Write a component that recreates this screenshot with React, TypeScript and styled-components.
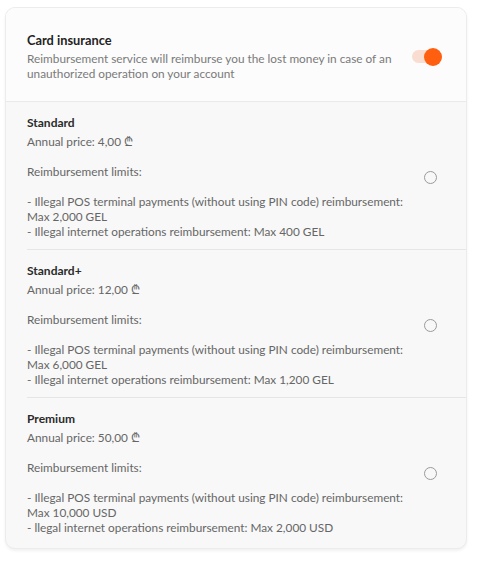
import React from "react";
import styled, { createGlobalStyle } from "styled-components";

const GlobalStyle = createGlobalStyle`
  body {
    margin: 0;
    background: #ffffff;
    font-family: Lato, "Noto Sans", sans-serif;
  }
`;

const Page = styled.div`
  padding: 7px 15px 0 5px;
`;

const Card = styled.section`
  width: 460px;
  border: 1px solid #ececec;
  border-radius: 10px;
  background: #f8f8f8;
  box-shadow: 0 2px 3px rgba(0, 0, 0, 0.06);
  overflow: hidden;
`;

const Header = styled.header`
  display: flex;
  align-items: center;
  gap: 20px;
  padding: 24px 21px 20px 21px;
  background: #fcfcfc;
  border-bottom: 1px solid #e9e9e9;
`;

const HeaderText = styled.div`
  flex: 1;
`;

const Title = styled.h2`
  margin: 0 0 3px;
  font-size: 12.8px;
  font-weight: 700;
  color: #232323;
  line-height: 16px;
`;

const Description = styled.p`
  margin: 0;
  font-size: 11.8px;
  line-height: 15px;
  color: #7a7a7a;
`;

const Toggle = styled.div<{ on?: boolean }>`
  position: relative;
  flex: none;
  width: 25px;
  height: 13px;
  margin-right: 8px;
  border-radius: 7px;
  background: ${(p) => (p.on ? "#f8ddd0" : "#e2e2e2")};

  &::after {
    content: "";
    position: absolute;
    top: 50%;
    left: ${(p) => (p.on ? "12px" : "-4px")};
    width: 18px;
    height: 18px;
    margin-top: -9px;
    border-radius: 50%;
    background: ${(p) => (p.on ? "#ff5f0f" : "#ffffff")};
  }
`;

const Options = styled.div`
  padding-left: 21px;
`;

const Option = styled.label`
  display: flex;
  align-items: center;
  gap: 12px;
  padding: 13px 29px 10px 0;
  border-bottom: 1px solid #e6e6e6;

  &:last-child {
    border-bottom: none;
    padding-bottom: 13px;
  }
`;

const OptionText = styled.div`
  flex: 1;
  font-size: 11.8px;
  line-height: 15px;
  color: #666666;
`;

const OptionName = styled.div`
  margin-bottom: 4px;
  font-size: 12px;
  font-weight: 700;
  color: #2a2a2a;
`;

const Line = styled.div<{ gapAfter?: boolean }>`
  margin-bottom: ${(p) => (p.gapAfter ? "15px" : "0")};
`;

const Radio = styled.span`
  width: 11px;
  height: 11px;
  flex: none;
  border: 1.5px solid #9a9a9a;
  border-radius: 50%;
  background: transparent;
`;

const BottomRule = styled.div`
  width: 460px;
  margin-top: 15px;
  border-top: 1px solid #ececec;
`;

const plans = [
  {
    name: "Standard",
    price: "4,00",
    pos: "Max 2,000 GEL",
    net: "- Illegal internet operations reimbursement: Max 400 GEL",
  },
  {
    name: "Standard+",
    price: "12,00",
    pos: "Max 6,000 GEL",
    net: "- Illegal internet operations reimbursement: Max 1,200 GEL",
  },
  {
    name: "Premium",
    price: "50,00",
    pos: "Max 10,000 USD",
    net: "- llegal internet operations reimbursement: Max 2,000 USD",
  },
];

export default function App() {
  return (
    <Page>
      <GlobalStyle />
      <Card>
        <Header>
          <HeaderText>
            <Title>Card insurance</Title>
            <Description>
              Reimbursement service will reimburse you the lost money in case of an
              unauthorized operation on your account
            </Description>
          </HeaderText>
          <Toggle on />
        </Header>
        <Options>
          {plans.map((plan) => (
            <Option key={plan.name}>
              <OptionText>
                <OptionName>{plan.name}</OptionName>
                <Line gapAfter>Annual price: {plan.price} ₾</Line>
                <Line gapAfter>Reimbursement limits:</Line>
                <Line>
                  - Illegal POS terminal payments (without using PIN code) reimbursement:
                </Line>
                <Line>{plan.pos}</Line>
                <Line>{plan.net}</Line>
              </OptionText>
              <Radio />
            </Option>
          ))}
        </Options>
      </Card>
      <BottomRule />
    </Page>
  );
}
